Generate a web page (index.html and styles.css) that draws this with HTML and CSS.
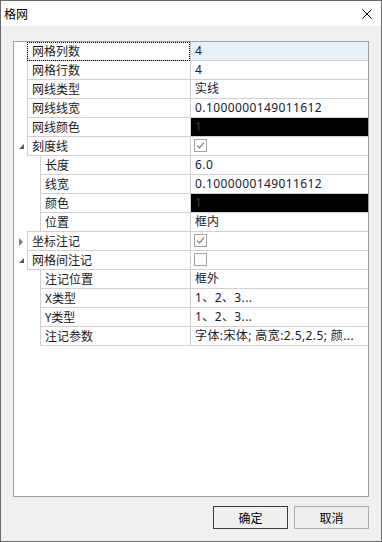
FILE: index.html
```html
<!DOCTYPE html>
<html lang="zh-CN">

<head>
    <meta charset="UTF-8">
    <meta name="viewport" content="width=device-width, initial-scale=1.0">
    <title>格网</title>
    <link rel="stylesheet" href="styles.css">
</head>

<body>
    <div class="window">
        <div class="titlebar">
            <span class="title">格网</span>
            <svg class="close" width="10" height="10" viewBox="0 0 10 10">
                <path d="M0.5 0.5 L9.5 9.5 M9.5 0.5 L0.5 9.5" stroke="#000" stroke-width="1" fill="none"/>
            </svg>
        </div>
        <div class="content">
            <div class="grid">
                <div class="row top">
                    <span class="gutter"></span>
                    <span class="name focus">网格列数</span>
                    <span class="value selected">4</span>
                </div>
                <div class="row top">
                    <span class="gutter"></span>
                    <span class="name">网格行数</span>
                    <span class="value">4</span>
                </div>
                <div class="row top">
                    <span class="gutter"></span>
                    <span class="name">网线类型</span>
                    <span class="value">实线</span>
                </div>
                <div class="row top">
                    <span class="gutter"></span>
                    <span class="name">网线线宽</span>
                    <span class="value num">0.1000000149011612</span>
                </div>
                <div class="row top">
                    <span class="gutter"></span>
                    <span class="name">网线颜色</span>
                    <span class="value black">1</span>
                </div>
                <div class="row top">
                    <span class="gutter">
                        <svg width="5" height="5" viewBox="0 0 5 5"><polygon points="5,0 5,5 0,5" fill="#595959"/></svg>
                    </span>
                    <span class="name">刻度线</span>
                    <span class="value">
                        <svg class="check" width="13" height="13" viewBox="0 0 13 13">
                            <rect x="0.5" y="0.5" width="12" height="12" fill="#fff" stroke="#a3a3a3"/>
                            <path d="M3 6.5 L5.5 9 L10 3.5" stroke="#8a8a8a" stroke-width="1.2" fill="none"/>
                        </svg>
                    </span>
                </div>
                <div class="row child">
                    <span class="gutter"></span>
                    <span class="name">长度</span>
                    <span class="value num">6.0</span>
                </div>
                <div class="row child">
                    <span class="gutter"></span>
                    <span class="name">线宽</span>
                    <span class="value num">0.1000000149011612</span>
                </div>
                <div class="row child">
                    <span class="gutter"></span>
                    <span class="name">颜色</span>
                    <span class="value black">1</span>
                </div>
                <div class="row child">
                    <span class="gutter"></span>
                    <span class="name">位置</span>
                    <span class="value">框内</span>
                </div>
                <div class="row top">
                    <span class="gutter">
                        <svg width="5" height="8" viewBox="0 0 5 8"><polygon points="0,0 4,4 0,8" fill="#7a7a7a"/></svg>
                    </span>
                    <span class="name">坐标注记</span>
                    <span class="value">
                        <svg class="check" width="13" height="13" viewBox="0 0 13 13">
                            <rect x="0.5" y="0.5" width="12" height="12" fill="#fff" stroke="#a3a3a3"/>
                            <path d="M3 6.5 L5.5 9 L10 3.5" stroke="#8a8a8a" stroke-width="1.2" fill="none"/>
                        </svg>
                    </span>
                </div>
                <div class="row top">
                    <span class="gutter">
                        <svg width="5" height="5" viewBox="0 0 5 5"><polygon points="5,0 5,5 0,5" fill="#595959"/></svg>
                    </span>
                    <span class="name">网格间注记</span>
                    <span class="value">
                        <svg class="check" width="13" height="13" viewBox="0 0 13 13">
                            <rect x="0.5" y="0.5" width="12" height="12" fill="#fff" stroke="#a3a3a3"/>
                        </svg>
                    </span>
                </div>
                <div class="row child">
                    <span class="gutter"></span>
                    <span class="name">注记位置</span>
                    <span class="value">框外</span>
                </div>
                <div class="row child">
                    <span class="gutter"></span>
                    <span class="name">X类型</span>
                    <span class="value num">1、2、3...</span>
                </div>
                <div class="row child">
                    <span class="gutter"></span>
                    <span class="name">Y类型</span>
                    <span class="value num">1、2、3...</span>
                </div>
                <div class="row child">
                    <span class="gutter"></span>
                    <span class="name">注记参数</span>
                    <span class="value num">字体:宋体; 高宽:2.5,2.5; 颜...</span>
                </div>
            </div>
            <div class="buttons">
                <button class="btn default">确定</button>
                <button class="btn">取消</button>
            </div>
        </div>
    </div>
</body>

</html>
```

FILE: styles.css
```css
* {
    padding: 0;
    margin: 0;
    box-sizing: border-box;
}

body {
    background: #f0f0f0;
    font-family: "Noto Sans", "Noto Sans CJK SC", sans-serif;
    font-size: 12px;
    color: #111;
}

.window {
    width: 382px;
    height: 542px;
    border: 1px solid #6a6a6a;
    background: #f0f0f0;
    display: flex;
    flex-direction: column;
}

.titlebar {
    height: 25px;
    background: #fff;
    display: flex;
    align-items: center;
    justify-content: space-between;
    padding: 0 9px 0 3px;
}

.titlebar .title {
    font-family: "Noto Sans CJK SC", sans-serif;
    font-size: 12px;
    color: #000;
}

.content {
    flex: 1;
    padding: 15px 12px 0 12px;
}

.grid {
    height: 456px;
    border: 1px solid #a0a0a0;
    background: #fff;
}

.grid .row {
    display: grid;
    grid-template-columns: 13px 163px 1fr;
    height: 19px;
    line-height: 18px;
}

.grid .row.child {
    grid-template-columns: 26px 150px 1fr;
}

.grid .gutter {
    display: flex;
    align-items: center;
    justify-content: flex-end;
    padding-right: 3px;
}

.grid .name {
    border-left: 1px solid #d0d0d0;
    border-bottom: 1px solid #d0d0d0;
    padding-left: 4px;
    font-family: "Noto Sans CJK SC", sans-serif;
    color: #1a1a1a;
    white-space: nowrap;
}

.grid .child + .top .name {
    box-shadow: 0 -1px 0 #d0d0d0;
}

.grid .name.focus {
    outline: 1px dotted #000;
    outline-offset: -1px;
}

.grid .value {
    border-left: 1px solid #d0d0d0;
    border-bottom: 1px solid #d0d0d0;
    padding-left: 4px;
    white-space: nowrap;
    overflow: hidden;
    color: #1a1a2a;
}

.grid .value.num {
    letter-spacing: 0.4px;
}

.grid .value.selected {
    background: #e5f1fb;
}

.grid .value.black {
    background: #000;
    color: #3c3c3c;
}

.grid .value .check {
    display: block;
    margin: 2px 0 0 -1px;
}

.buttons {
    display: flex;
    justify-content: flex-end;
    gap: 6px;
    margin-top: 9px;
}

.btn {
    width: 75px;
    height: 23px;
    border: 1px solid #adadad;
    background: #efefef;
    font-family: "Noto Sans CJK SC", sans-serif;
    font-size: 12px;
    color: #000;
}

.btn.default {
    border-color: #3c3c3c;
}
```
